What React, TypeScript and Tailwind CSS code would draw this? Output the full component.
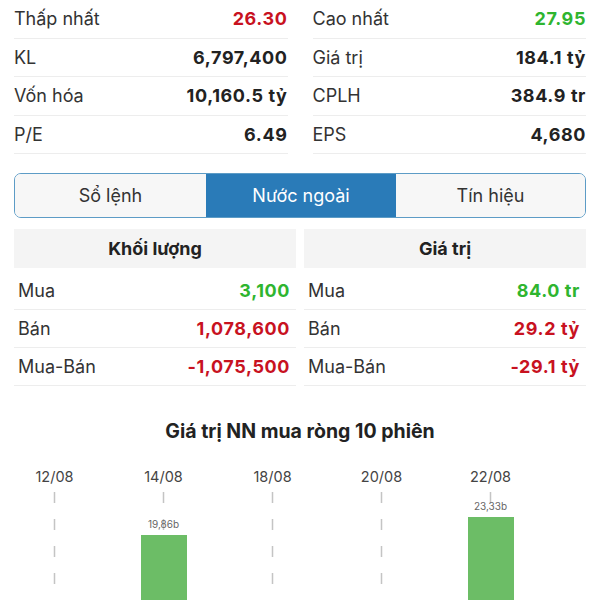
import React from 'react'

const stats = [
  [
    { label: 'Thấp nhất', value: '26.30', color: 'text-[#c8121f]' },
    { label: 'KL', value: '6,797,400', color: 'text-[#222]' },
    { label: 'Vốn hóa', value: '10,160.5 tỷ', color: 'text-[#222]' },
    { label: 'P/E', value: '6.49', color: 'text-[#222]' },
  ],
  [
    { label: 'Cao nhất', value: '27.95', color: 'text-[#2fb52f]' },
    { label: 'Giá trị', value: '184.1 tỷ', color: 'text-[#222]' },
    { label: 'CPLH', value: '384.9 tr', color: 'text-[#222]' },
    { label: 'EPS', value: '4,680', color: 'text-[#222]' },
  ],
]

const foreign = [
  {
    title: 'Khối lượng',
    rows: [
      { label: 'Mua', value: '3,100', color: 'text-[#2fb52f]' },
      { label: 'Bán', value: '1,078,600', color: 'text-[#c8121f]' },
      { label: 'Mua-Bán', value: '-1,075,500', color: 'text-[#c8121f]' },
    ],
  },
  {
    title: 'Giá trị',
    rows: [
      { label: 'Mua', value: '84.0 tr', color: 'text-[#2fb52f]' },
      { label: 'Bán', value: '29.2 tỷ', color: 'text-[#c8121f]' },
      { label: 'Mua-Bán', value: '-29.1 tỷ', color: 'text-[#c8121f]' },
    ],
  },
]

const columns = [
  { date: '12/08' },
  { date: '14/08', bar: 43, label: '19,86b' },
  { date: '18/08' },
  { date: '20/08' },
  { date: '22/08', bar: 25, label: '23,33b' },
]

const App = () => {
  return (
    <div className="w-[600px] h-[600px] overflow-hidden bg-white font-['Inter','Liberation_Sans',sans-serif] text-[#222]">
      {/* stats */}
      <div className="flex gap-[25px] px-[14px]">
        {stats.map((col, i) => (
          <div key={i} className="flex-1">
            {col.map((s) => (
              <div key={s.label} className="h-[38.5px] flex items-center justify-between border-b border-[#ededed] text-[18px]">
                <span className="text-[#333]">{s.label}</span>
                <span className={`font-bold tracking-[0.6px] ${s.color}`}>{s.value}</span>
              </div>
            ))}
          </div>
        ))}
      </div>

      {/* tabs */}
      <div className="mx-[14px] mt-[19px] h-[45px] flex border-[1.5px] border-[#5d9cc6] rounded-[7px] overflow-hidden text-[18px]">
        <div className="w-[191px] flex items-center justify-center bg-[#f7f7f7] text-[#333]">Sổ lệnh</div>
        <div className="w-[190px] flex items-center justify-center bg-[#2a7bb8] text-white">Nước ngoài</div>
        <div className="flex-1 flex items-center justify-center bg-[#f7f7f7] text-[#333]">Tín hiệu</div>
      </div>

      {/* foreign tables */}
      <div className="flex gap-[8px] px-[14px] mt-[11px]">
        {foreign.map((t) => (
          <div key={t.title} className="flex-1">
            <div className="h-[39px] flex items-center justify-center bg-[#f4f4f4] font-bold text-[18px]">{t.title}</div>
            <div className="mt-[4px]">
              {t.rows.map((r) => (
                <div key={r.label} className="h-[38px] flex items-center justify-between pl-[4px] pr-[6px] border-b border-[#ededed] text-[18px]">
                  <span className="text-[#333]">{r.label}</span>
                  <span className={`font-bold tracking-[0.6px] ${r.color}`}>{r.value}</span>
                </div>
              ))}
            </div>
          </div>
        ))}
      </div>

      {/* chart */}
      <div className="mt-[32px] text-center font-bold text-[19.5px] leading-[27px] text-[#222]">Giá trị NN mua ròng 10 phiên</div>
      <div className="flex mt-[23px]">
        {columns.map((c) => (
          <div key={c.date} className="w-[109px] flex flex-col items-center">
            <div className="text-[14.5px] text-[#444] leading-[18px]">{c.date}</div>
            <div className="relative w-full h-[120px] mt-[6px]">
              <svg className="absolute left-0 top-0" width="109" height="120">
                <line x1="54.5" y1="0" x2="54.5" y2="120" stroke="#c4c4c4" strokeWidth="1.5" strokeDasharray="11 16" />
              </svg>
              {c.bar && (
                <>
                  <div
                    className="absolute left-[32px] w-[46px] bottom-0 bg-[#6cbd66]"
                    style={{ top: c.bar }}
                  />
                  <div
                    className="absolute left-0 w-full text-center text-[10px] text-[#666] leading-[12px]"
                    style={{ top: c.bar - 17 }}
                  >
                    {c.label}
                  </div>
                </>
              )}
            </div>
          </div>
        ))}
      </div>
    </div>
  )
}

export default App
